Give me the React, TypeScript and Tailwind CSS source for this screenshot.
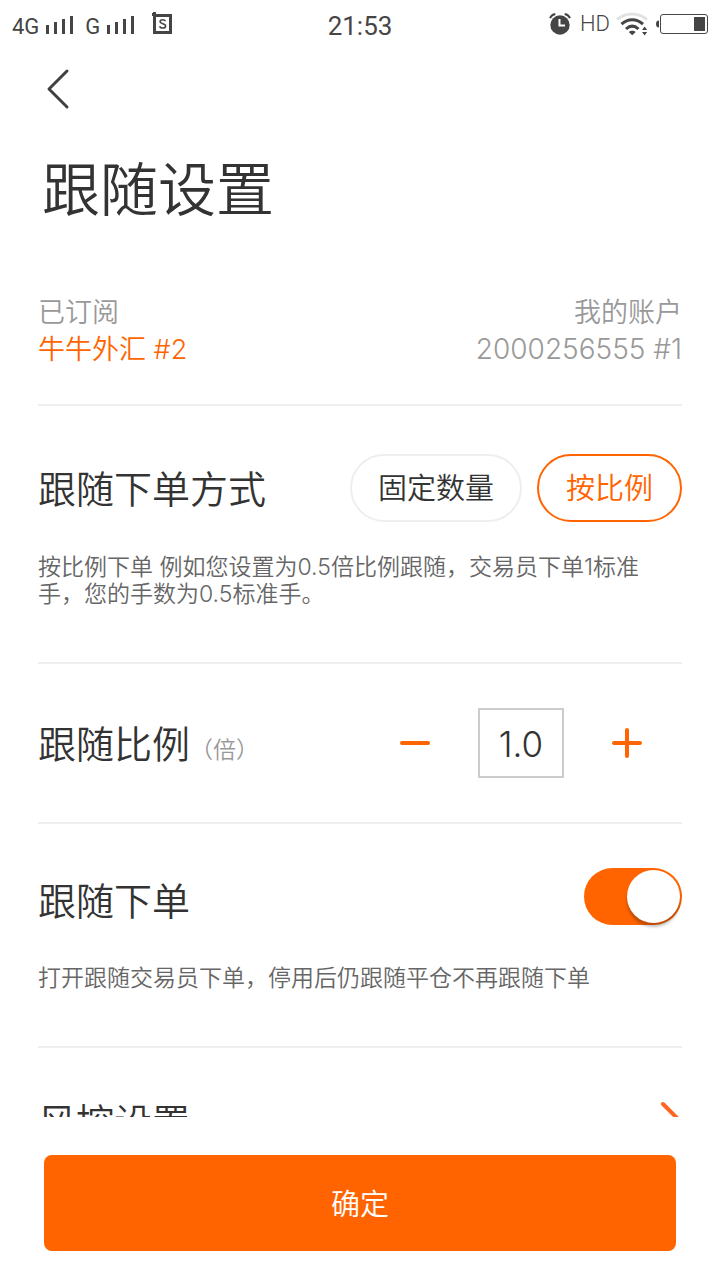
import { useState } from 'react';
import type { ReactNode } from 'react';

function SignalBars() {
  return (
    <svg width="27" height="20" viewBox="0 0 27 20" fill="#454545" aria-hidden="true">
      <rect x="0" y="10" width="3" height="9" />
      <rect x="8" y="7" width="3" height="12" />
      <rect x="16" y="4" width="3" height="15" />
      <rect x="24" y="1" width="3" height="18" />
    </svg>
  );
}

function AppBadge() {
  return (
    <svg width="20" height="22" viewBox="0 0 20 22" fill="none" stroke="#454545" aria-hidden="true">
      <path d="M2.5 3.5H18.5V20.5H2.5Z" strokeWidth="3" />
      <path d="M0 2.5H4M2.5 0V4" strokeWidth="3" />
      <path d="M13.4 9.2C13 8.2 12 7.7 10.7 7.7C9.2 7.7 8.1 8.4 8.1 9.6C8.1 12.4 13.6 10.9 13.6 13.9C13.6 15.2 12.4 16 10.8 16C9.2 16 8 15.4 7.7 14.2" strokeWidth="1.6" />
    </svg>
  );
}

function AlarmIcon() {
  return (
    <svg width="22" height="22" viewBox="0 0 22 22" fill="none" aria-hidden="true">
      <circle cx="11" cy="12" r="9.7" fill="#454545" />
      <path d="M1 5.2C2 3 3.8 1.5 6.3 1M21 5.2C20 3 18.2 1.5 15.7 1" stroke="#454545" strokeWidth="2" />
      <path d="M10.5 6V12.5H16" stroke="#fff" strokeWidth="2" />
    </svg>
  );
}

function WifiIcon() {
  return (
    <svg width="32" height="24" viewBox="0 0 32 24" fill="none" aria-hidden="true">
      <path d="M1 7.5C9.5 0 22.5 0 31 7.5" stroke="#e2e2e2" strokeWidth="3" />
      <path d="M5.5 12.2C12 6.3 20.5 6.3 27 12.2" stroke="#454545" strokeWidth="3" />
      <path d="M10 17C14 13.3 18.5 13.3 22.5 17" stroke="#454545" strokeWidth="3" />
      <path d="M12.8 20C14.5 18.3 18 18.3 19.7 20L16.2 23.3Z" fill="#454545" />
      <path d="M26 18L28.6 14.5L31.2 18ZM26 20L28.6 23.5L31.2 20Z" fill="#454545" />
    </svg>
  );
}

function BatteryIcon() {
  return (
    <svg width="52" height="20" viewBox="0 0 52 20" fill="none" aria-hidden="true">
      <path d="M3 6.5V13.5C1 13.5 0 12.5 0 10C0 7.5 1 6.5 3 6.5Z" fill="#454545" />
      <rect x="4.5" y="0.5" width="47" height="19" rx="2.5" stroke="#454545" />
      <rect x="38" y="3" width="11" height="14" fill="#454545" />
    </svg>
  );
}

function StatusBar() {
  return (
    <div className="grid h-[50px] shrink-0 grid-cols-[1fr_auto_1fr] items-center px-3 font-[Roboto,sans-serif] font-normal text-[#454545]">
      <div className="flex items-center text-[22px] leading-[26px]">
        <span className="pt-1">4G</span>
        <span className="pl-[7px]">
          <SignalBars />
        </span>
        <span className="pt-1 pl-3">G</span>
        <span className="pl-[7px]">
          <SignalBars />
        </span>
        <span className="pb-1 pl-[18px]">
          <AppBadge />
        </span>
      </div>
      <time className="pt-[2px] text-[26px] leading-[30px]">21:53</time>
      <div className="flex items-center justify-end pb-[2px]">
        <AlarmIcon />
        <span className="pr-[6px] pl-[9px] text-[22px] leading-[28px] font-[350]">HD</span>
        <WifiIcon />
        <span className="pl-2">
          <BatteryIcon />
        </span>
      </div>
    </div>
  );
}

function Section({ children, className = '' }: { children: ReactNode; className?: string }) {
  return <section className={`border-b-2 border-[#eeeeee] ${className}`}>{children}</section>;
}

function Heading({ children }: { children: ReactNode }) {
  return <h2 className="pt-[2px] text-[38px] leading-[48px] font-[350] whitespace-nowrap text-[#333333]">{children}</h2>;
}

function ModeButton({ active, onClick, children }: { active: boolean; onClick: () => void; children: ReactNode }) {
  return (
    <button
      type="button"
      aria-pressed={active}
      onClick={onClick}
      className={`h-[68px] rounded-full border-2 pt-[2px] text-[29px] leading-[36px] font-[350] whitespace-nowrap ${
        active ? 'border-[#ff6400] px-[27px] text-[#ff6400]' : 'border-[#eeeeee] px-[26px] text-[#333333]'
      }`}
    >
      {children}
    </button>
  );
}

export default function App() {
  const [mode, setMode] = useState<'fixed' | 'ratio'>('ratio');
  const [ratio, setRatio] = useState('1.0');
  const [following, setFollowing] = useState(true);

  const step = (delta: number) =>
    setRatio((value) => Math.max(0.1, (parseFloat(value) || 0) + delta).toFixed(1));

  return (
    <div className="flex h-screen flex-col bg-white font-[Inter,'Noto_Sans_CJK_SC',sans-serif] font-[350] text-[#333333]">
      <StatusBar />
      <header className="shrink-0 px-[38px] pt-[18px]">
        <button type="button" aria-label="返回" className="block pl-2">
          <svg width="24" height="42" viewBox="0 0 24 42" fill="none" stroke="#404040" strokeWidth="3" strokeLinecap="round" strokeLinejoin="round" aria-hidden="true">
            <path d="M21 3L3 21L21 39" />
          </svg>
        </button>
        <h1 className="mt-11 pl-1 text-[58px] leading-[72px] font-[350]">跟随设置</h1>
      </header>

      <main className="min-h-0 flex-1 overflow-y-auto px-[38px] pt-[68px] [scrollbar-width:none]">
        <Section className="flex justify-between pb-9 text-[27px] leading-[37px]">
          <div>
            <p className="text-[#999999]">已订阅</p>
            <p className="text-[#ff6400]">牛牛外汇 #2</p>
          </div>
          <div className="text-right text-[#999999]">
            <p>我的账户</p>
            <p className="text-[28px]">2000256555 #1</p>
          </div>
        </Section>

        <Section className="pt-12 pb-[54px]">
          <div className="flex items-center justify-between">
            <Heading>跟随下单方式</Heading>
            <div className="flex gap-[15px]">
              <ModeButton active={mode === 'fixed'} onClick={() => setMode('fixed')}>
                固定数量
              </ModeButton>
              <ModeButton active={mode === 'ratio'} onClick={() => setMode('ratio')}>
                按比例
              </ModeButton>
            </div>
          </div>
          <p className="mt-8 text-[23px] leading-[27px] text-[#666666]">
            按比例下单 例如您设置为0.5倍比例跟随，交易员下单1标准手，您的手数为0.5标准手。
          </p>
        </Section>

        <Section className="flex items-center justify-between py-11">
          <div className="flex items-baseline">
            <Heading>
              <label htmlFor="ratio">跟随比例</label>
            </Heading>
            <span className="text-[23px] leading-[36px] text-[#999999]">（倍）</span>
          </div>
          <div className="flex items-center gap-12 pr-10">
            <button type="button" aria-label="减少" onClick={() => step(-0.1)}>
              <svg width="30" height="30" viewBox="0 0 30 30" stroke="#ff6400" strokeWidth="4" strokeLinecap="round" aria-hidden="true">
                <path d="M2 15H28" />
              </svg>
            </button>
            <input
              id="ratio"
              type="text"
              inputMode="decimal"
              value={ratio}
              onChange={(event) => setRatio(event.target.value)}
              className="h-[70px] w-[86px] border-2 border-[#cccccc] pt-[2px] text-center text-[35px] leading-[42px] font-[350] outline-none"
            />
            <button type="button" aria-label="增加" onClick={() => step(0.1)}>
              <svg width="30" height="30" viewBox="0 0 30 30" stroke="#ff6400" strokeWidth="4" strokeLinecap="round" aria-hidden="true">
                <path d="M2 15H28M15 2V28" />
              </svg>
            </button>
          </div>
        </Section>

        <Section className="pt-11 pb-[54px]">
          <div className="flex items-end justify-between">
            <Heading>
              <label htmlFor="follow">跟随下单</label>
            </Heading>
            <input
              id="follow"
              type="checkbox"
              role="switch"
              checked={following}
              onChange={(event) => setFollowing(event.target.checked)}
              className="flex h-[57px] w-[98px] appearance-none items-center rounded-full bg-[#dddddd] px-[2px] before:block before:size-[53px] before:rounded-full before:bg-white before:shadow-[0_4px_3px_rgba(0,0,0,0.25)] checked:justify-end checked:bg-[#ff6400]"
            />
          </div>
          <p className="mt-10 text-[23px] leading-[27px] text-[#666666]">
            打开跟随交易员下单，停用后仍跟随平仓不再跟随下单
          </p>
        </Section>

        <a href="#risk" className="flex items-center justify-between pt-12 pb-11">
          <Heading>风控设置</Heading>
          <svg width="22" height="44" viewBox="0 0 22 44" fill="none" stroke="#ff6422" strokeWidth="4" strokeLinecap="round" strokeLinejoin="round" aria-hidden="true">
            <path d="M3 5L20 22L3 39" />
          </svg>
        </a>
      </main>

      <footer className="shrink-0 px-11 pt-[38px] pb-[29px]">
        <button type="button" className="h-24 w-full rounded-lg bg-[#ff6400] pt-1 text-[29px] leading-[36px] font-[350] text-white">
          确定
        </button>
      </footer>
    </div>
  );
}
